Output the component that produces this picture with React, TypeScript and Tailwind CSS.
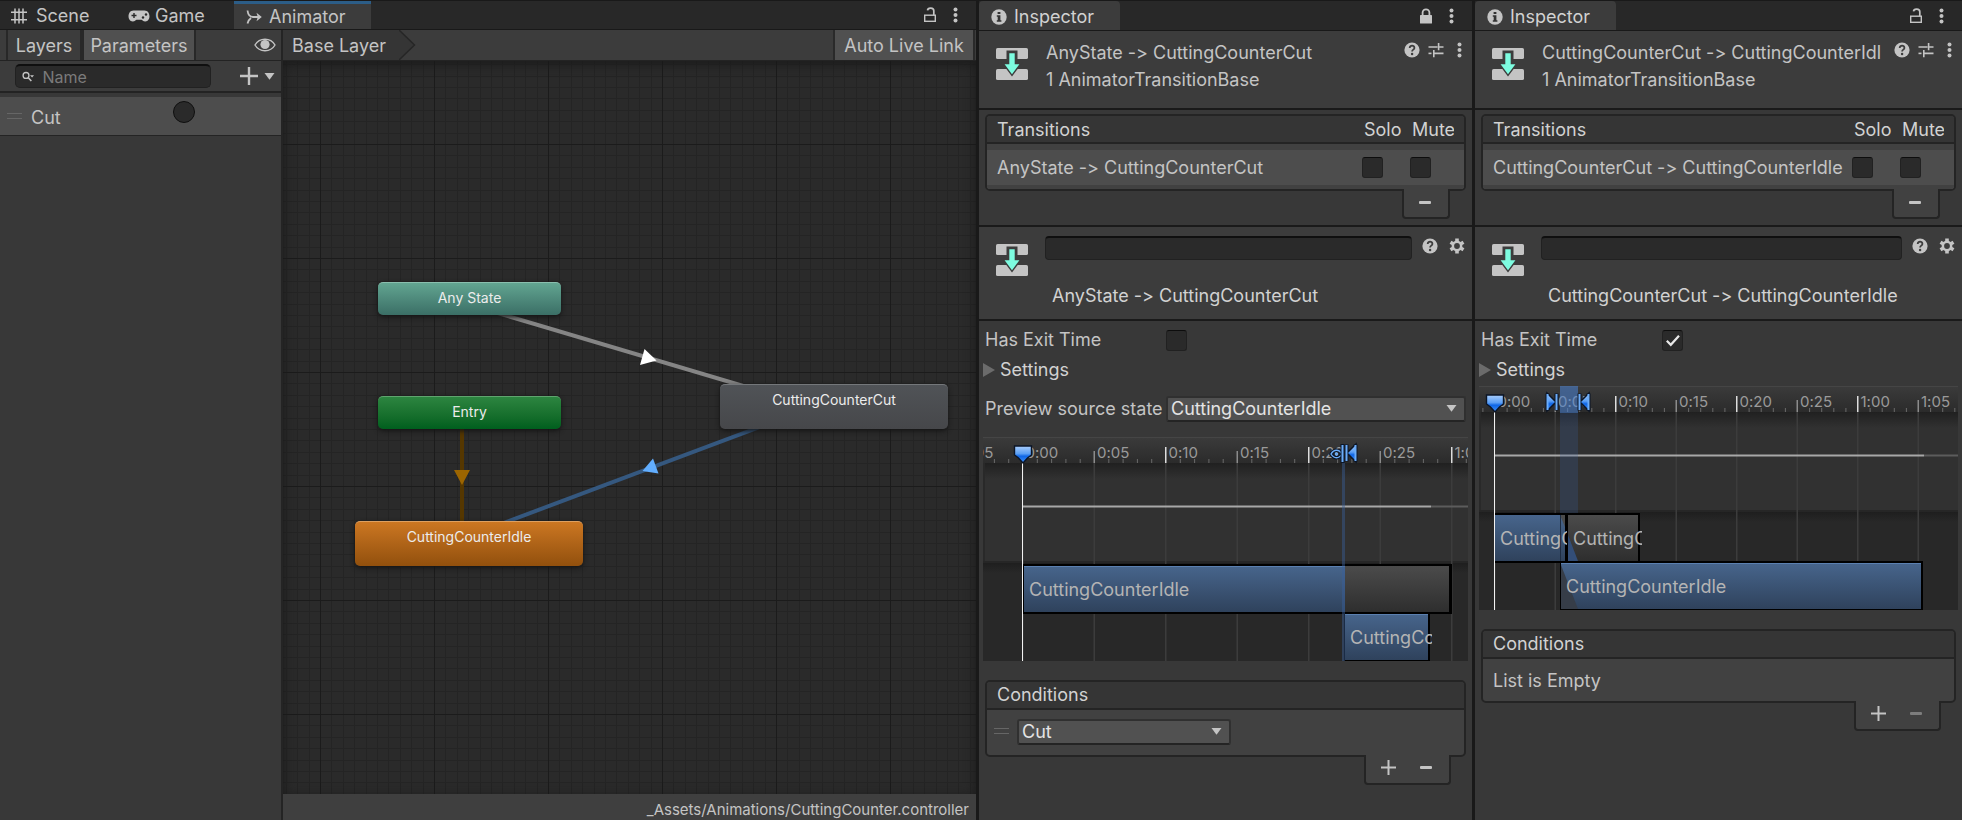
import React, { useState } from 'react';

// ---------- icons ----------

const DotsIcon = () => (
  <svg width="5" height="16" viewBox="0 0 5 16" fill="#c4c4c4">
    <circle cx="2.5" cy="2.5" r="2" />
    <circle cx="2.5" cy="8" r="2" />
    <circle cx="2.5" cy="13.5" r="2" />
  </svg>
);

const UnlockIcon = () => (
  <svg width="14" height="16" viewBox="0 0 14 16" fill="none" stroke="#c4c4c4" strokeWidth="1.4">
    <rect x="1.7" y="8.2" width="10.6" height="6.1" />
    <path d="M10.8 8.2V3.8c0-3.6-6-3.6-6.3-.4" strokeWidth="1.7" />
  </svg>
);

const LockIcon = () => (
  <svg width="14" height="16" viewBox="0 0 14 16">
    <rect x="1" y="7" width="12" height="8.5" rx="0.6" fill="#c4c4c4" />
    <path d="M3.6 7.5V4.6c0-4.4 6.8-4.4 6.8 0v2.9" fill="none" stroke="#c4c4c4" strokeWidth="1.8" />
  </svg>
);

const InfoIcon = () => (
  <svg width="16" height="16" viewBox="0 0 16 16">
    <circle cx="8" cy="8" r="7.7" fill="#c4c4c4" />
    <path d="M6.6 2.9h2.8v2H6.6zM5.8 6.2h3.6v5h1v1.6H5.8v-1.6h.9V7.8h-.9z" fill="#333333" />
  </svg>
);

const HelpIcon = () => (
  <svg width="16" height="16" viewBox="0 0 16 16">
    <circle cx="8" cy="8" r="7.6" fill="#c4c4c4" />
    <path d="M5.7 6c0-3.2 4.8-3 4.7-.1 0 1.7-2.3 1.7-2.3 3.5" fill="none" stroke="#3c3c3c" strokeWidth="1.8" />
    <circle cx="8.1" cy="12" r="1.2" fill="#3c3c3c" />
  </svg>
);

const PresetIcon = () => (
  <svg width="16" height="16" viewBox="0 0 16 16" fill="none" stroke="#c4c4c4" strokeWidth="1.6">
    <path d="M0.5 5h9M10.6 1v7.2M10.6 5H15.5M5.8 8v7.2M6 11.4h9.5" />
    <path d="M0.5 11.4h3" />
  </svg>
);

const GearIcon = () => (
  <svg width="16" height="16" viewBox="0 0 16 16">
    <g stroke="#c4c4c4" strokeWidth="3.6">
      <path d="M8 0.5v15M1.5 4.25l13 7.5M1.5 11.75l13-7.5" />
    </g>
    <circle cx="8" cy="8" r="5.4" fill="#c4c4c4" />
    <circle cx="8" cy="8" r="2.9" fill="#3c3c3c" />
  </svg>
);

const TransitionIcon = () => (
  <svg width="32" height="32" viewBox="0 0 32 32">
    <rect x="0" y="0" width="32" height="11" rx="1.6" fill="#c4c4c4" />
    <rect x="0" y="21" width="32" height="11" rx="1.6" fill="#c4c4c4" />
    <path d="M10.5 2.5h11v12h5L16 28.5 5.5 14.5h5z" fill="#3c3c3c" />
    <path d="M13.3 5.3h5.4v10.9h4.7L16 26.2 8.6 16.2h4.7z" fill="#7dfce0" />
  </svg>
);

const SceneIcon = () => (
  <svg width="16" height="16" viewBox="0 0 16 16" stroke="#c4c4c4" strokeWidth="1.5">
    <path d="M4 0.5v15M8 0.5v15M12 0.5v15M0 4.2h16M0 11.8h16" />
  </svg>
);

const GameIcon = () => (
  <svg width="22" height="12" viewBox="0 0 22 12">
    <path d="M5.5 0.5h11c6.5 0 6.500 11 .8 11-2.3 0-2.8-1.800-4-1.800H8.700c-1.200 0-1.700 1.800-4 1.800-5.700 0-5.700-11 .8-11z" fill="#c4c4c4" />
    <path d="M6 3v5M3.5 5.5h5" stroke="#282828" strokeWidth="1.4" />
    <circle cx="15" cy="7.5" r="1.2" fill="#282828" />
    <circle cx="18" cy="4.5" r="1.2" fill="#282828" />
  </svg>
);

const AnimatorIcon = () => (
  <svg width="16" height="14" viewBox="0 0 16 14" fill="none" stroke="#c4c4c4" strokeWidth="1.8">
    <path d="M1.5 0.5C2 4.5 3.5 7 7 7h5M1.5 13.5C2 11 3 9.5 5 8" />
    <path d="M10.5 2.8L15.800 7l-5.300 4.200L11.800 7z" fill="#c4c4c4" stroke="none" />
  </svg>
);

const EyeIcon = () => (
  <svg width="22" height="14" viewBox="0 0 22 14">
    <path d="M1 7C5.5-.7 16.5-.7 21 7c-4.500 7.700-15.500 7.700-20 0z" fill="none" stroke="#c4c4c4" strokeWidth="1.4" />
    <circle cx="11" cy="6.5" r="4.6" fill="#c4c4c4" />
  </svg>
);

const SearchIcon = () => (
  <svg width="14" height="12" viewBox="0 0 14 12">
    <circle cx="4.5" cy="4.2" r="3.3" fill="none" stroke="#c4c4c4" strokeWidth="1.5" />
    <path d="M6.8 6.6l3.7 4" stroke="#c4c4c4" strokeWidth="1.7" />
    <path d="M9 4h4.6l-2.3 2.6z" fill="#c4c4c4" />
  </svg>
);

const Caret = ({ className = '' }: { className?: string }) => (
  <svg className={className} width="11" height="7" viewBox="0 0 11 7" fill="#c4c4c4">
    <path d="M0.5 0h10L5.5 6.8z" />
  </svg>
);

const Plus = ({ size = 15 }: { size?: number }) => (
  <svg width={size} height={size} viewBox="0 0 15 15" stroke="#c4c4c4" strokeWidth="2">
    <path d="M7.5 0v15M0 7.5h15" />
  </svg>
);

const Minus = ({ dim = false }: { dim?: boolean }) => (
  <svg width="12" height="3" viewBox="0 0 12 3">
    <rect width="12" height="3" rx="1" fill={dim ? '#7d7d7d' : '#c4c4c4'} />
  </svg>
);

const DragHandle = () => (
  <svg width="16" height="7" viewBox="0 0 16 7" fill="#666666" className="shrink-0">
    <rect width="15" height="1" />
    <rect y="5" width="15" height="1" />
  </svg>
);

// ---------- shared controls ----------

function CheckBox({ label, id, defaultChecked = false }: { label?: string; id?: string; defaultChecked?: boolean }) {
  const [checked, setChecked] = useState(defaultChecked);
  return (
    <span className="relative block size-[21px] shrink-0">
      <input
        id={id}
        type="checkbox"
        aria-label={label}
        checked={checked}
        onChange={(e) => setChecked(e.target.checked)}
        className="block size-[21px] appearance-none rounded-[3px] border border-[#212121] border-t-[#0d0d0d] bg-[#2a2a2a]"
      />
      {checked && (
        <svg className="pointer-events-none absolute top-1 left-1" width="14" height="13" viewBox="0 0 14 13">
          <path d="M0.8 6.8l4 4L13 1.8" fill="none" stroke="#e8e8e8" strokeWidth="2.2" />
        </svg>
      )}
    </span>
  );
}

function Dropdown({ id, label, value, className }: { id?: string; label?: string; value: string; className: string }) {
  return (
    <span className={`relative block ${className}`}>
      <select
        id={id}
        aria-label={label}
        className="block h-[26px] w-full appearance-none rounded-[3px] border-2 border-[#303030] border-b-[#242424] bg-[#515151] px-[3px] text-lg leading-5 text-[#e4e4e4]"
      >
        <option>{value}</option>
      </select>
      <Caret className="pointer-events-none absolute top-[9px] right-[9px]" />
    </span>
  );
}

const Tab = ({ icon, children }: { icon: React.ReactNode; children: React.ReactNode }) => (
  <button className="flex h-full w-[141px] items-center gap-[7px] rounded-t-[4px] bg-[#3c3c3c] pt-[2px] pl-[12px] text-[#d2d2d2]">
    {icon}
    {children}
  </button>
);

const WindowButtons = ({ locked = false }: { locked?: boolean }) => (
  <div className="ml-auto flex items-center gap-4 pr-[18px]">
    <button aria-label="Lock">{locked ? <LockIcon /> : <UnlockIcon />}</button>
    <button aria-label="Window menu"><DotsIcon /></button>
  </div>
);

// ---------- animator window ----------

const nodes = [
  { name: 'Any State', box: 'left-[95px] top-[221px] w-[183px] h-[33px]', color: 'from-[#62a591] to-[#3b6f66] border-t-[#8abfae]' },
  { name: 'Entry', box: 'left-[95px] top-[335px] w-[183px] h-[33px]', color: 'from-[#2c8540] to-[#005f1e] border-t-[#5fa56e]' },
  { name: 'CuttingCounterCut', box: 'left-[437px] top-[323px] w-[228px] h-[45px]', color: 'from-[#505357] to-[#46474a] border-t-[#74777a]' },
  { name: 'CuttingCounterIdle', box: 'left-[72px] top-[460px] w-[228px] h-[45px]', color: 'from-[#cc7722] to-[#92500d] border-t-[#dda061]' },
];

const minor = [11, 23, 34, 46, 57, 68, 80, 91, 103];

function Canvas() {
  return (
    <div className="relative flex-1 overflow-hidden bg-[#2a2a2a]">
      <svg className="absolute inset-0 h-full w-full">
        <defs>
          <pattern id="grid" x="37" y="83" width="114" height="114" patternUnits="userSpaceOnUse">
            {minor.map((m) => (
              <g key={m} fill="#242424">
                <rect x={m} y="0" width="1" height="114" />
                <rect x="0" y={m} width="114" height="1" />
              </g>
            ))}
            <rect width="1" height="114" fill="#1b1b1b" />
            <rect width="114" height="1" fill="#1b1b1b" />
          </pattern>
        </defs>
        <rect width="100%" height="100%" fill="url(#grid)" />

        {/* transitions, drawn under the nodes */}
        <path d="M186 243.500L551 352" stroke="#858585" strokeWidth="4" />
        <path d="M361.5 288L373.5 299.500L357 304z" fill="#ffffff" />
        <path d="M551 338L186 475" stroke="#35587f" strokeWidth="4" />
        <path d="M370 397.500L359.5 410L375.500 412.500z" fill="#62aeff" />
        <path d="M179 368V460" stroke="#553700" strokeWidth="4" />
        <path d="M171 409h16l-8 15z" fill="#9c6500" />
      </svg>
      <div className="pointer-events-none absolute inset-0 shadow-[inset_0_3px_12px_#1a1a1a]" />
      {nodes.map((node) => (
        <div
          key={node.name}
          className={`absolute rounded-[5px] border-t bg-linear-to-b pt-[6px] text-center text-sm leading-[18px] text-[#ececec] shadow-[0_2px_5px_#151515] ${node.box} ${node.color}`}
        >
          {node.name}
        </div>
      ))}
    </div>
  );
}

function AnimatorWindow() {
  return (
    <section className="flex min-w-0 flex-col bg-[#383838]">
      <div className="flex h-[30px] shrink-0 border-t border-b border-[#191919] bg-[#282828]">
        <button className="flex w-[117px] items-center gap-[9px] pt-[2px] pl-[11px]"><SceneIcon />Scene</button>
        <button className="flex w-[117px] items-center gap-[5px] pt-[2px] pl-[11px]"><GameIcon />Game</button>
        <button className="flex w-[137px] items-center gap-[7px] border-t-[3px] border-[#2c5d87] bg-[#3c3c3c] pl-[12px]">
          <AnimatorIcon />Animator
        </button>
        <WindowButtons />
      </div>

      <div className="flex min-h-0 flex-1">
        <aside className="flex w-[283px] shrink-0 flex-col border-r-2 border-[#242424]">
          <div className="flex h-[31px] items-stretch border-b border-[#232323] bg-[#3c3c3c] pl-[6px]">
            <button className="w-[76px] border-x-2 border-[#282828] pt-[2px]">Layers</button>
            <button className="w-[114px] border-x-2 border-[#282828] bg-[#505050] pt-[2px]">Parameters</button>
            <button className="mr-[5px] ml-auto" aria-label="Toggle panel"><EyeIcon /></button>
          </div>
          <div className="flex h-[32px] items-center border-b-2 border-[#232323] bg-[#3c3c3c] pr-[6px] pl-[15px]">
            <label className="flex h-6 w-[196px] items-center gap-2 rounded-[5px] border border-[#212121] border-t-2 border-t-[#0f0f0f] bg-[#2a2a2a] pl-[6px]">
              <SearchIcon />
              <input placeholder="Name" className="w-full bg-transparent text-base outline-none placeholder:text-[#7b7b7b]" />
            </label>
            <button className="ml-auto flex items-center gap-[6px]" aria-label="Add parameter">
              <Plus size={18} />
              <Caret />
            </button>
          </div>
          <div className="mt-1 flex h-[39px] items-center border-b border-[#242424] bg-[#4d4d4d] pl-[7px]">
            <DragHandle />
            <label htmlFor="param-cut" className="w-[150px] pt-[3px] pl-2">Cut</label>
            <input
              id="param-cut"
              type="radio"
              className="mb-2 size-[22px] appearance-none rounded-full border border-[#0f0f0f] bg-[#2a2a2a] checked:bg-[#c4c4c4]"
            />
          </div>
        </aside>

        <div className="flex min-w-0 flex-1 flex-col">
          <div className="flex h-[31px] items-stretch border-b border-[#232323] bg-[#3c3c3c]">
            <button className="w-[116px] bg-[#353535] pt-[2px] pl-[9px] text-left whitespace-nowrap">Base Layer</button>
            <svg width="18" height="30" viewBox="0 0 18 30">
              <path d="M0 0L15 15L0 30z" fill="#353535" />
              <path d="M0 0L15.5 15L0 30" fill="none" stroke="#262626" strokeWidth="1.5" />
            </svg>
            <button className="mr-[1px] ml-auto w-[142px] border-x-2 border-[#2a2a2a] bg-[#505050] pt-[2px] whitespace-nowrap">Auto Live Link</button>
          </div>
          <Canvas />
          <div className="flex h-[26px] items-end justify-end bg-[#3f3f3f] pr-[7px] text-[15px] leading-5">
            _Assets/Animations/CuttingCounter.controller
          </div>
        </div>
      </div>
    </section>
  );
}

// ---------- timeline ----------

interface TimelineProps {
  origin: number; // x of frame 0
  frame: number; // pixels per frame
  curveEnd: number;
  labels: string[];
  firstFrame: number;
  children: React.ReactNode;
}

const BLUE = 'url(#clip-blue)';
const GRAY = 'url(#clip-gray)';

const Playhead = ({ x }: { x: number }) => (
  <g>
    <path d={`M${x} 26V224`} stroke="#f2f2f2" />
    <path d={`M${x - 8} 9h17v9l-4 3l-4.500 5l-4.500-5l-4-3z`} fill="url(#handle)" stroke="#0b1526" strokeWidth="1.4" />
  </g>
);

// A bar and a triangle that points at it
const OutMarker = ({ x }: { x: number }) => (
  <g>
    <path d={`M${x + 1.500} 7.500v17M${x + 10.500} 7.500v17`} stroke="#0b1526" strokeWidth="4" />
    <path d={`M${x + 11} 7v18l-9-9z`} fill="url(#handle)" stroke="#0b1526" strokeWidth="1.5" />
    <path d={`M${x + 1.500} 8v16M${x + 10.500} 8v16`} stroke="#6bacf9" strokeWidth="2" />
  </g>
);

const InMarker = ({ x }: { x: number }) => (
  <g>
    <path d={`M${x + 1.500} 7.500v17M${x + 10.500} 7.500v17`} stroke="#0b1526" strokeWidth="4" />
    <path d={`M${x + 1} 7v18l9-9z`} fill="url(#handle)" stroke="#0b1526" strokeWidth="1.5" />
    <path d={`M${x + 1.500} 8v16M${x + 10.500} 8v16`} stroke="#6bacf9" strokeWidth="2" />
  </g>
);

function Timeline({ origin, frame, curveEnd, labels, firstFrame, children }: TimelineProps) {
  const frames = Array.from({ length: 60 }, (_, i) => i - 10);
  return (
    <svg className="block h-[224px] w-full overflow-hidden bg-[#282828]">
      <defs>
        <linearGradient id="clip-blue" x2="0" y2="1">
          <stop offset="0" stopColor="#47658c" />
          <stop offset="1" stopColor="#2f425c" />
        </linearGradient>
        <linearGradient id="clip-gray" x2="0" y2="1">
          <stop offset="0" stopColor="#4b4b4b" />
          <stop offset="1" stopColor="#2e2e2e" />
        </linearGradient>
        <linearGradient id="handle" x2="0" y2="1">
          <stop offset="0" stopColor="#a9cdfb" />
          <stop offset="0.45" stopColor="#5b9ff5" />
          <stop offset="0.6" stopColor="#0f66e6" />
          <stop offset="1" stopColor="#3f8ff5" />
        </linearGradient>
        <linearGradient id="ruler" x2="0" y2="1">
          <stop offset="0" stopColor="#3b3b3b" />
          <stop offset="1" stopColor="#2b2b2b" />
        </linearGradient>
        <linearGradient id="shade" x2="0" y2="1">
          <stop offset="0" stopColor="#1c1c1c" stopOpacity="0.8" />
          <stop offset="1" stopColor="#1c1c1c" stopOpacity="0" />
        </linearGradient>
      </defs>
      <rect width="100%" height="26" fill="url(#ruler)" />
      <rect width="100%" height="1" fill="#454545" />
      <rect y="26" width="100%" height="98" fill="#313131" />
      <rect y="26" width="100%" height="16" fill="url(#shade)" />
      <rect y="124" width="100%" height="2" fill="#262626" />
      <rect y="126" width="100%" height="10" fill="url(#shade)" />
      <rect y="26" width="2" height="98" fill="#292929" />
      {frames.map((f) => {
        const x = origin + f * frame;
        if (f % 5 !== 0) return <rect key={f} x={x} y="22" width="1" height="4" fill="#6a6a6a" />;
        return (
          <g key={f}>
            <rect x={x - 0.5} y={f % 10 === 0 ? 10 : 14} width="1.5" height={f % 10 === 0 ? 16 : 12} fill={f % 10 === 0 ? '#dddddd' : '#8b8b8b'} />
            <rect x={x - 0.5} y="26" width="1.5" height="198" fill="#3c3c3c" />
          </g>
        );
      })}
      {labels.map((label, i) => (
        <text key={label} x={origin + (firstFrame + i * 5) * frame + 3} y="21" fontSize="15" fill="#9a9a9a">{label}</text>
      ))}
      <path d={`M${curveEnd} 69.5H2000`} stroke="#5c5c5c" strokeWidth="2" />
      <path d={`M${origin} 69.5H${curveEnd}`} stroke="#a8a8a8" strokeWidth="2" />
      {children}
      <Playhead x={origin} />
    </svg>
  );
}

const CutTimeline = () => (
  <Timeline origin={39.5} frame={14.3} curveEnd={448} firstFrame={-5} labels={['-0:05', '0:00', '0:05', '0:10', '0:15', '0:20', '0:25', '1:00']}>
    <rect x="40" y="127" width="429" height="50" fill="#000000" />
    <rect x="41" y="129" width="321" height="46" fill={BLUE} />
    <rect x="41" y="129" width="321" height="1" fill="#5b80b0" />
    <rect x="362" y="129" width="104" height="46" fill={GRAY} />
    <rect x="361" y="177" width="86" height="47" fill="#000000" />
    <rect x="362" y="177" width="83" height="46" fill={BLUE} />
    <rect x="362" y="177" width="83" height="1" fill="#5b80b0" />
    <svg x="0" y="177" width="449" height="46">
      <text x="367" y="30" fontSize="18" fill="#b4b4b4">CuttingCounterCut</text>
    </svg>
    <text x="46" y="159" fontSize="18" fill="#b4b4b4">CuttingCounterIdle</text>
    <rect x="359" y="26" width="3" height="198" fill="#3a5f9a" opacity="0.45" />
    <g fill="none" stroke="#6bacf9" strokeWidth="1.4">
      <path d="M348 17c3-5 8-5 11 0c-3 5-8 5-11 0z" stroke="#0b1526" strokeWidth="3.5" />
      <path d="M348 17c3-5 8-5 11 0c-3 5-8 5-11 0z" />
      <circle cx="353.5" cy="17" r="1" />
    </g>
    <path d="M359.5 7v19" stroke="#0b1526" strokeWidth="4" />
    <path d="M359.5 8v17" stroke="#6bacf9" strokeWidth="2" />
    <OutMarker x={362} />
  </Timeline>
);

const IdleTimeline = () => (
  <Timeline origin={15.5} frame={12.1} curveEnd={445} firstFrame={0} labels={['0:00', '0:05', '0:10', '0:15', '0:20', '0:25', '1:00', '1:05']}>
    <rect x="81" y="0" width="18" height="27" fill="#4b83d6" opacity="0.55" />
    <rect x="81" y="27" width="18" height="197" fill="#3a5f9a" opacity="0.25" />
    <rect x="16" y="127" width="145" height="50" fill="#000000" />
    <rect x="16" y="129" width="70" height="46" fill={BLUE} />
    <rect x="89" y="129" width="70" height="46" fill={GRAY} />
    <path d="M89 149L99 175H89z" fill="#334e78" />
    <path d="M81 129h5v12z" fill="#4b4b4b" />
    <rect x="81" y="129" width="1" height="46" fill="#1d2c42" />
    <rect x="81" y="175" width="363" height="49" fill="#000000" />
    <rect x="82" y="177" width="360" height="46" fill={BLUE} />
    <rect x="82" y="177" width="360" height="1" fill="#5b80b0" />
    <path d="M82 179L99 223H82z" fill="#363d48" />
    <svg x="0" y="129" width="88" height="46">
      <text x="21" y="30" fontSize="18" fill="#b4b4b4">CuttingCounterCut</text>
    </svg>
    <svg x="0" y="129" width="163" height="46">
      <text x="94" y="30" fontSize="18" fill="#b4b4b4">CuttingCounterCut</text>
    </svg>
    <text x="87" y="207" fontSize="18" fill="#b4b4b4">CuttingCounterIdle</text>
    <InMarker x={67} />
    <OutMarker x={99} />
  </Timeline>
);

// ---------- inspector window ----------

interface InspectorProps {
  id: string;
  name: string;
  locked?: boolean;
  hasExitTime?: boolean;
  previewState?: string;
  condition?: string;
  timeline: React.ReactNode;
}

function Inspector({ id, name, locked, hasExitTime, previewState, condition, timeline }: InspectorProps) {
  return (
    <section className="flex min-w-0 flex-col bg-[#383838]">
      <div className="flex h-[31px] shrink-0 border-t border-b border-[#191919] bg-[#282828]">
        <Tab icon={<InfoIcon />}>Inspector</Tab>
        <WindowButtons locked={locked} />
      </div>

      <header className="flex h-[79px] items-start border-b-2 border-[#1a1a1a] bg-[#3c3c3c] pt-2 pr-[10px] pl-[17px]">
        <div className="pt-[9px]"><TransitionIcon /></div>
        <div className="ml-[18px] min-w-0 flex-1 leading-[27px] whitespace-nowrap">
          <div className="overflow-hidden">{name}</div>
          <div>1 AnimatorTransitionBase</div>
        </div>
        <div className="ml-[13px] flex gap-2 pt-[3px]">
          <button aria-label="Help"><HelpIcon /></button>
          <button aria-label="Presets"><PresetIcon /></button>
          <button className="pl-[5px]" aria-label="Component menu"><DotsIcon /></button>
        </div>
      </header>

      <div className="border-b-2 border-[#1a1a1a] px-[6px] pt-1 pb-[6px]">
        <div className="overflow-hidden rounded-[5px] border-2 border-[#242424] bg-[#414141]">
          <table className="w-full table-fixed border-separate border-spacing-0 text-left whitespace-nowrap">
            <colgroup>
              <col />
              <col className="w-[48px]" />
              <col className="w-[54px]" />
            </colgroup>
            <thead>
              <tr className="h-[28px] bg-[#353535] leading-6 text-[#d2d2d2]">
                <th className="border-b-2 border-[#242424] p-0 pt-[2px] pl-[10px] font-normal">Transitions</th>
                <th className="border-b-2 border-[#242424] p-0 pt-[2px] pl-[2px] font-normal">Solo</th>
                <th className="border-b-2 border-[#242424] p-0 pt-[2px] pl-[2px] font-normal"><div className="w-[42px] overflow-hidden">Mute</div></th>
              </tr>
            </thead>
            <tbody>
              <tr className="h-[45px] bg-[#4d4d4d]">
                <td className="overflow-hidden border-t-[6px] border-b-4 border-[#414141] p-0 pl-[10px]">{name}</td>
                <td className="border-t-[6px] border-b-4 border-[#414141] p-0"><CheckBox label="Solo" /></td>
                <td className="border-t-[6px] border-b-4 border-[#414141] p-0"><CheckBox label="Mute" /></td>
              </tr>
            </tbody>
          </table>
        </div>
        <div className="relative -mt-[2px] mr-4 ml-auto flex h-[30px] w-[48px] justify-center rounded-b-[4px] border-2 border-t-0 border-[#242424] bg-[#414141] pr-[2px] pb-[2px]">
          <button aria-label="Remove transition"><Minus /></button>
        </div>
      </div>

      <div className="flex h-[94px] items-start border-b-2 border-[#1a1a1a] bg-[#3c3c3c] pt-[9px] pr-[7px] pl-[17px]">
        <div className="pt-2"><TransitionIcon /></div>
        <div className="ml-[17px] min-w-0 flex-1">
          <input aria-label="Transition name" className="block h-6 w-full rounded-[4px] border border-[#212121] border-t-2 border-t-[#0f0f0f] bg-[#2a2a2a] px-1 outline-none" />
          <div className="mt-[22px] ml-[7px] leading-[27px] whitespace-nowrap text-[#d2d2d2]">{name}</div>
        </div>
        <div className="ml-[10px] flex gap-[11px] pt-[2px]">
          <button aria-label="Help"><HelpIcon /></button>
          <button aria-label="Settings"><GearIcon /></button>
        </div>
      </div>

      <div className="px-[6px] pt-2">
        <div className="flex h-[22px] items-center">
          <label htmlFor={`${id}-exit`} className="w-[181px]">Has Exit Time</label>
          <CheckBox id={`${id}-exit`} defaultChecked={hasExitTime} />
        </div>
        <button className="-ml-[2px] mt-[6px] flex h-[26px] items-center gap-[5px] text-[#d2d2d2]">
          <svg width="12" height="14" viewBox="0 0 12 14"><path d="M0 0L12 7L0 14z" fill="#6b6b6b" /></svg>
          Settings
        </button>
        {previewState && (
          <div className="mt-[13px] mb-[12px] flex h-[26px] items-center">
            <label htmlFor={`${id}-preview`} className="mr-1 w-[177px] shrink-0 overflow-hidden whitespace-nowrap">Preview source state</label>
            <Dropdown id={`${id}-preview`} value={previewState} className="flex-1" />
          </div>
        )}
      </div>

      <div className="mt-[3px] px-1">{timeline}</div>

      <div className="mt-[19px] px-[6px]">
        <div className="overflow-hidden rounded-[5px] border-2 border-[#242424] bg-[#414141]">
          <div className="h-[28px] border-b-2 border-[#242424] bg-[#353535] pl-[10px] leading-[26px] text-[#d2d2d2]">Conditions</div>
          {condition ? (
            <div className="flex h-[45px] items-center gap-[7px] pb-[2px] pl-[7px]">
              <DragHandle />
              <Dropdown label="Condition" value={condition} className="w-[214px]" />
            </div>
          ) : (
            <div className="h-[42px] pl-[10px] leading-[44px]">List is Empty</div>
          )}
        </div>
        <div className="relative -mt-[2px] mr-[15px] ml-auto flex h-[30px] w-[87px] items-stretch justify-center gap-[24px] rounded-b-[4px] border-2 border-t-0 border-[#242424] bg-[#414141] pr-[2px] pb-[3px]">
          <button aria-label="Add condition"><Plus /></button>
          <button aria-label="Remove condition" disabled={!condition}><Minus dim={!condition} /></button>
        </div>
      </div>
    </section>
  );
}

export default function App() {
  return (
    <main className="grid min-h-screen grid-cols-[976fr_493fr_487fr] gap-[3px] bg-[#191919] font-['Inter','Noto_Sans',sans-serif] text-lg leading-6 text-[#c4c4c4] [font-optical-sizing:none] [font-variant-ligatures:no-contextual]">
      <AnimatorWindow />
      <Inspector
        id="cut"
        name="AnyState -> CuttingCounterCut"
        locked
        previewState="CuttingCounterIdle"
        condition="Cut"
        timeline={<CutTimeline />}
      />
      <Inspector id="idle" name="CuttingCounterCut -> CuttingCounterIdle" hasExitTime timeline={<IdleTimeline />} />
    </main>
  );
}
